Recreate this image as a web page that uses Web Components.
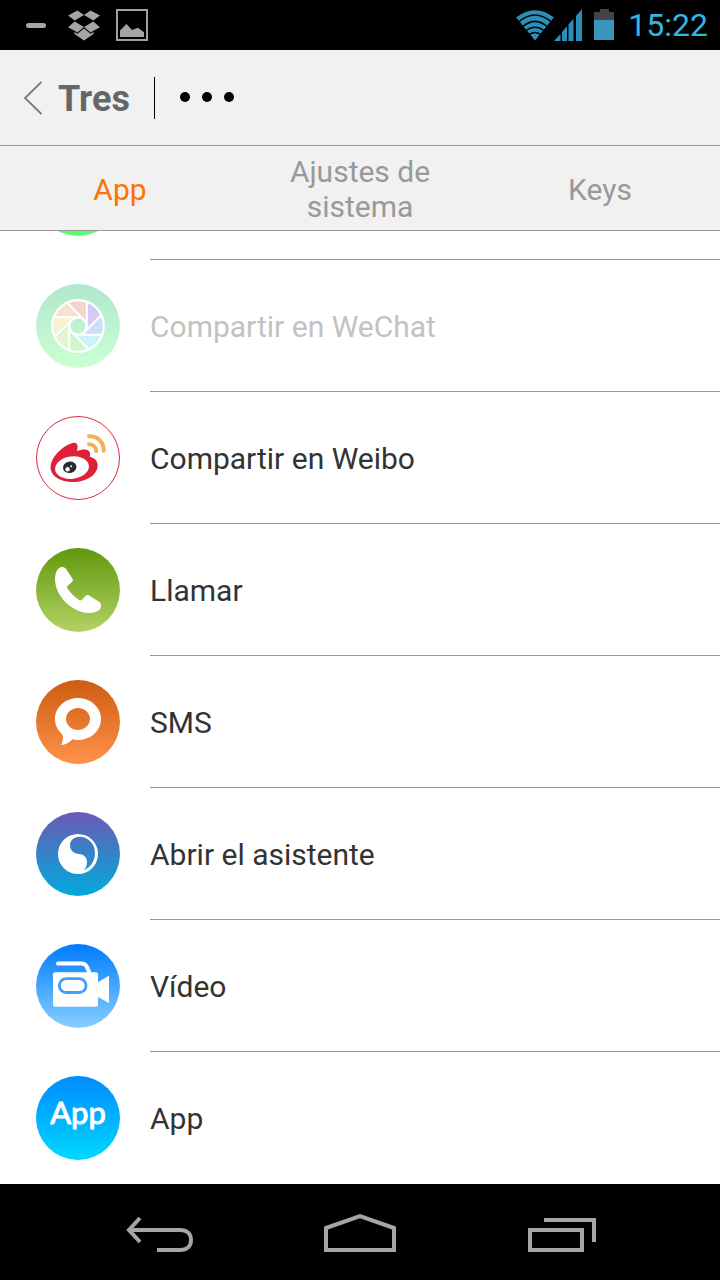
<!DOCTYPE html>
<html lang="es">
<head>
<meta charset="utf-8">
<meta name="viewport" content="width=device-width, initial-scale=1">
<title>Tres</title>
<style>
  html, body { margin: 0; height: 100%; }
  body { font-family: Roboto, "Liberation Sans", sans-serif; background: #fff; color: #333; }
</style>
</head>
<body>
<phone-screen>
  <status-bar slot="top">15:22</status-bar>
  <title-bar slot="top">Tres</title-bar>
  <tab-strip slot="top">
    <tab-item selected>App</tab-item>
    <tab-item>Ajustes de sistema</tab-item>
    <tab-item>Keys</tab-item>
  </tab-strip>
  <action-row icon="chat"></action-row>
  <action-row icon="moments" disabled>Compartir en WeChat</action-row>
  <action-row icon="weibo">Compartir en Weibo</action-row>
  <action-row icon="phone">Llamar</action-row>
  <action-row icon="sms">SMS</action-row>
  <action-row icon="assistant">Abrir el asistente</action-row>
  <action-row icon="video">Vídeo</action-row>
  <action-row icon="app" last>App</action-row>
  <nav-bar slot="bottom"></nav-bar>
</phone-screen>

<script>
const BUTTON_RESET = `
  button { appearance: none; border: 0; margin: 0; padding: 0; background: none; color: inherit; font: inherit; cursor: pointer; }
  svg { display: block; flex: none; }
`;

function define(name, build) {
  customElements.define(name, class extends HTMLElement {
    constructor() {
      super();
      this.attachShadow({ mode: 'open' });
    }
    connectedCallback() {
      const t = document.createElement('template');
      t.innerHTML = build(this);
      this.shadowRoot.replaceChildren(t.content.cloneNode(true));
    }
  });
}

define('phone-screen', () => `
  <style>
    :host { display: flex; flex-direction: column; height: 100vh; overflow: hidden; }
    main { flex: 1; min-height: 0; overflow: hidden; display: flex; flex-direction: column; justify-content: flex-end; background: #fff; }
  </style>
  <slot name="top"></slot>
  <main><slot></slot></main>
  <slot name="bottom"></slot>
`);

define('status-bar', () => `
  <style>${BUTTON_RESET}
    :host { display: flex; align-items: center; justify-content: space-between; flex: none; height: 50px; padding: 0 12px; background: #000; color: #33b5e5; font-size: 32px; line-height: 52px; }
    div { display: flex; align-items: center; }
    .left { gap: 16px; }
    .battery { margin: 0 14px 0 12px; }
  </style>
  <div class="left">
    <svg width="40" height="32" viewBox="0 0 40 32" aria-hidden="true"><rect x="14" y="14" width="20" height="5" rx="2.5" fill="#a5a5a5"/></svg>
    <svg width="32" height="32" viewBox="0 0 32 32" fill="#a5a5a5" aria-hidden="true">
      <path d="M9.300 1.500L16 6 6.700 11.500.100 6.600zM22.700 1.500L16 6l9.300 5.500L32 6.600zM6.700 12.500L16 18 9.500 23.500.100 18.200zM25.300 12.500L16 18l6.500 5.500 9.400-5.300zM16 19.500l6.500 5.200 3-1.600v2L16 31.500l-9.500-6.400v-2l3 1.600z"/>
    </svg>
    <svg width="32" height="32" viewBox="0 0 32 32" aria-hidden="true">
      <rect x="1" y="1" width="30" height="30" fill="none" stroke="#a0a0a0" stroke-width="2"/>
      <path d="M4 28v-6.500L10.500 15l5.500 6 6-2.200 6 4.400V28z" fill="#a5a5a5"/>
    </svg>
  </div>
  <div>
    <svg width="38" height="32" viewBox="0 0 38 32" aria-hidden="true">
      <clipPath id="fan"><path d="M19 32L-2 6V0H40V6z"/></clipPath>
      <g clip-path="url(#fan)">
        <path d="M19 31.500L0 8.500Q19-6 38 8.500z" fill="#2b8fba"/>
        <g fill="none" stroke="#000" stroke-width="1.500">
          <path d="M2 13.500Q19-1.500 36 13.500M6 18.300Q19 6.500 32 18.300M9 22.500Q19 14 29 22.500M12 26.500Q19 20.500 26 26.500"/>
        </g>
      </g>
    </svg>
    <svg width="28" height="32" viewBox="0 0 28 32" fill="#2b8fba" aria-hidden="true"><path d="M0 32l6.500-7v7zM8 32v-9l5-5.700V32zM14.500 32V15.500l5-5.800V32zM22 32V7l6-7v32z"/></svg>
    <svg class="battery" width="20" height="32" viewBox="0 0 20 32" aria-hidden="true"><path d="M0 3h6V0h9v3h5v9H0z" fill="#444"/><path d="M0 11h20v20H0z" fill="#3a95ba"/></svg>
    <slot></slot>
  </div>
`);

define('title-bar', () => `
  <style>${BUTTON_RESET}
    :host { display: flex; align-items: center; flex: none; box-sizing: border-box; height: 96px; padding: 0 24px; background: #f1f1f1; border-bottom: 1px solid #999; }
    .back { display: flex; align-items: center; gap: 16px; color: #666; font-size: 36px; font-weight: 700; line-height: 44px; }
    .back span { padding-top: 2px; }
    .line { width: 1px; height: 42px; margin: 0 24px; background: #000; }
  </style>
  <button class="back" type="button">
    <svg width="18" height="34" viewBox="0 0 18 34" aria-hidden="true"><path d="M17.500 1L1 17l16.500 16" fill="none" stroke="#777" stroke-width="1.800"/></svg>
    <span><slot></slot></span>
  </button>
  <span class="line"></span>
  <button type="button" aria-label="Más">
    <svg width="56" height="42" viewBox="0 0 56 42"><circle cx="6" cy="20" r="5"/><circle cx="28" cy="20" r="5"/><circle cx="50" cy="20" r="5"/></svg>
  </button>
`);

define('tab-strip', () => `
  <style>
    :host { display: grid; grid-template-columns: repeat(3, 1fr); flex: none; box-sizing: border-box; min-height: 85px; background: #f1f1f1; border-bottom: 1px solid #999; }
  </style>
  <slot></slot>
`);

define('tab-item', el => `
  <style>${BUTTON_RESET}
    :host { display: flex; color: #999; font-size: 30px; line-height: 35px; }
    :host([selected]) { color: #ff7200; }
    button { flex: 1; padding: 8px 36px 6px; text-align: center; }
  </style>
  <button type="button" aria-pressed="${el.hasAttribute('selected')}"><slot></slot></button>
`);

const blade = 'M8.500-24.500V3.500L23.300-11.300A26 26 0 0 0 8.500-24.500z';
const bladeFills = ['#d2cbf5', '#cddff8', '#cbf4f7', '#cff5cf', '#e4f6d0', '#f7f0cf', '#f5e3cf', '#f5d3cf'];

const ICONS = {
  chat: { from: '#20d060', to: '#5bff6b', art: '' },
  moments: { from: '#b0e8ce', to: '#cbffd2', art: `
    <g transform="translate(42 42)">
      ${bladeFills.map((f, i) => `<path d="${blade}" fill="${f}" transform="rotate(${i * 45})"/>`).join('')}
      ${bladeFills.map((f, i) => `<path d="M8.800-24.500V3.500" stroke="#fff" stroke-width="2" transform="rotate(${i * 45})"/>`).join('')}
      <circle r="25.800" fill="none" stroke="#fff" stroke-width="2.200"/>
      <circle r="8.500" fill="#bdf3d0" stroke="#fff" stroke-width="2"/>
    </g>` },
  weibo: { from: '#fff', to: '#fff', art: `
    <circle cx="42" cy="42" r="41.500" fill="#fff" stroke="#e02b40"/>
    <path d="M20 38.500C26 31.500 34 26.500 38.500 26.700 42 27 42 31 41 35 45 33.300 50 32.500 52.700 34.800 54.500 36.500 54.300 39 53.700 40.800 58.500 42 61.800 45 61.700 49.500 61.500 59 50 66 37.500 66 25 66 14.500 60.500 14.500 51 14.500 46.500 17 42 20 38.500z" fill="#e01f38"/>
    <ellipse cx="36" cy="51.600" rx="17" ry="11.200" fill="#fff" transform="rotate(-7 36 51.600)"/>
    <ellipse cx="33.700" cy="51.300" rx="6.800" ry="5.700" fill="#2b2b2b" transform="rotate(-10 33.700 51.300)"/>
    <circle cx="31.600" cy="53.200" r="2.200" fill="#fff"/><circle cx="35.200" cy="50.300" r="1" fill="#fff"/>
    <path d="M53 20.300C62 20 68 26.500 67.700 34.800M53 28.200C57 28.300 60 31 60.200 35" fill="none" stroke="#f5b04f" stroke-width="4" stroke-linecap="round"/>` },
  phone: { from: '#60980b', to: '#b4d265', art: `
    <path d="M19 31.500C19 24 22 19 26 19 28.300 19 29.500 20 30.500 21.500L36.300 30.500C37.200 32 37 33 36 34L32 37.500C31 38.500 31 39.500 31.500 40.500 34.500 45 38.500 49 43 52 44 52.700 45 52.700 46 51.800L49.500 48C50.500 47 51.500 46.700 53 47.500L63 53.800C65 55 65.300 57 65 59 64 63 58 65 52.500 65 35 64 19.500 48 19 31.500z" fill="#fff"/>` },
  sms: { from: '#cd5c12', to: '#ff9249', art: `
    <path fill-rule="evenodd" d="M42 18C54.700 18 65 27.500 65 39S54.700 60 42 60C40 60 38 59.800 36.500 59.300 33.500 62.800 29.500 64.800 25.200 65 27 60.500 27.500 57.500 26.500 54.500 21.500 50 19 45 19 39 19 27.500 29.300 18 42 18zM42 28C35.300 28 30 33 30 39S35.300 50 42 50 54 45 54 39 48.700 28 42 28z" fill="#fff"/>` },
  assistant: { from: '#6a5ab4', to: '#00abdc', art: `
    <path fill-rule="evenodd" d="M42 22A20 20 0 1 1 42 62 20 20 0 1 1 42 22zM43.500 24.800C38 24.800 34 28.800 34 33.300 34 38.500 38 41.800 43 42 48 42.200 51 45.500 51 50 51 53.500 50 56.500 47 58.300 54.500 56 59 49 59 41 59 32 52 24.800 43.500 24.800z" fill="#fff"/>` },
  video: { from: '#007bff', to: '#86d0ff', art: `
    <rect x="17" y="28.300" width="45" height="34.500" rx="2" fill="#fff"/>
    <path d="M61 38.800L73 31.700V59L61 52.500z" fill="#fff"/>
    <path d="M22 19.400H45.500C48 19.400 49.500 20.300 50.500 22.200L53.800 29.500" fill="none" stroke="#fff" stroke-width="4" stroke-linecap="round"/>
    <rect x="23.300" y="34.700" width="26.800" height="13.800" rx="6.900" fill="#fff" stroke="#3d9fff" stroke-width="2.800"/>` },
  app: { from: '#008bff', to: '#00d8ff', art: `
    <text x="42" y="48" text-anchor="middle" font-family="Lato, sans-serif" font-size="31" fill="#fff" stroke="#fff" stroke-width="1" stroke-linejoin="round">App</text>` }
};

define('action-icon', el => {
  const icon = ICONS[el.getAttribute('name')];
  return `
  <style>
    :host { display: block; width: 84px; height: 84px; }
    svg { display: block; }
  </style>
  <svg width="84" height="84" viewBox="0 0 84 84" aria-hidden="true">
    <linearGradient id="fill" x1="0" y1="0" x2="0" y2="1"><stop stop-color="${icon.from}"/><stop offset="1" stop-color="${icon.to}"/></linearGradient>
    <circle cx="42" cy="42" r="42" fill="url(#fill)"/>
    ${icon.art}
  </svg>`;
});

define('action-row', el => `
  <style>${BUTTON_RESET}
    :host { display: block; flex: none; color: #333; font-size: 30px; line-height: 36px; }
    :host([disabled]) { color: #c2c2c2; }
    button { display: flex; width: 100%; height: 132px; padding-left: 36px; text-align: left; }
    action-icon { flex: none; margin: 24px 30px 24px 0; }
    .label { flex: 1; display: flex; align-items: center; box-sizing: border-box; height: 132px; padding-top: 2px; border-bottom: 1px solid #999; }
    :host([last]) .label { border-color: transparent; }
  </style>
  <button type="button" ${el.hasAttribute('disabled') ? 'disabled' : ''}>
    <action-icon name="${el.getAttribute('icon')}"></action-icon>
    <span class="label"><slot></slot></span>
  </button>
`);

define('nav-bar', () => `
  <style>${BUTTON_RESET}
    :host { display: flex; flex: none; height: 96px; padding: 0 60px; background: #000; }
    button { flex: 1; display: flex; align-items: center; justify-content: center; }
    svg { fill: none; stroke: #a5a5a5; stroke-width: 4; }
  </style>
  <button type="button" aria-label="Atrás"><svg width="68" height="40" viewBox="0 0 68 40"><path d="M14 6L3 18 14 30M4 18H54C61 18 65 22 65 28S61 38 54 38H31"/></svg></button>
  <button type="button" aria-label="Inicio"><svg width="72" height="40" viewBox="0 0 72 40"><path d="M2 38V16L36 4 70 16V38z"/></svg></button>
  <button type="button" aria-label="Recientes"><svg width="72" height="40" viewBox="0 0 72 40"><path d="M6 18H58V38H6zM20 8H70V30"/></svg></button>
`);
</script>
</body>
</html>
